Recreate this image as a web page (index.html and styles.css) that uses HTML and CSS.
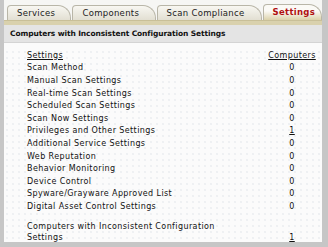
FILE: index.html
```html
<!DOCTYPE html>
<html lang="en">
<head>
  <meta charset="UTF-8">
  <title>Settings</title>
  <link rel="stylesheet" href="styles.css">
</head>
<body>

<div class="page">
  <div class="tabs">
    <div class="tab tab-services">Services</div>
    <div class="tab tab-components">Components</div>
    <div class="tab tab-scan">Scan Compliance</div>
    <div class="tab tab-settings active">Settings</div>
  </div>
  <div class="band"></div>

  <div class="panel">
    <div class="panel-title">Computers with Inconsistent Configuration Settings</div>
    <table class="grid">
      <tr class="head">
        <th class="name"><a href="#">Settings</a></th>
        <th class="count"><a href="#">Computers</a></th>
      </tr>
      <tr><td class="name">Scan Method</td><td class="count">0</td></tr>
      <tr><td class="name">Manual Scan Settings</td><td class="count">0</td></tr>
      <tr><td class="name">Real-time Scan Settings</td><td class="count">0</td></tr>
      <tr><td class="name">Scheduled Scan Settings</td><td class="count">0</td></tr>
      <tr><td class="name">Scan Now Settings</td><td class="count">0</td></tr>
      <tr><td class="name">Privileges and Other Settings</td><td class="count"><a href="#">1</a></td></tr>
      <tr><td class="name">Additional Service Settings</td><td class="count">0</td></tr>
      <tr><td class="name">Web Reputation</td><td class="count">0</td></tr>
      <tr><td class="name">Behavior Monitoring</td><td class="count">0</td></tr>
      <tr><td class="name">Device Control</td><td class="count">0</td></tr>
      <tr><td class="name">Spyware/Grayware Approved List</td><td class="count">0</td></tr>
      <tr><td class="name">Digital Asset Control Settings</td><td class="count">0</td></tr>
      <tr class="total">
        <td class="name">Computers with Inconsistent Configuration Settings</td>
        <td class="count"><a href="#">1</a></td>
      </tr>
    </table>
  </div>
</div>

</body>
</html>
```

FILE: styles.css
```css
body {
  margin: 0;
  background: #c6c6c6;
  font-family: "DejaVu Sans", Verdana, sans-serif;
  color: #111;
}

.page {
  margin-left: 4px;
  width: 318px;
  height: 242px;
  background: #f6f6f4;
  overflow: hidden;
}

.tabs {
  display: flex;
  gap: 1px;
  padding: 4px 0 0 3px;
  height: 16px;
}

.tab {
  box-sizing: border-box;
  height: 15px;
  margin-top: 1px;
  padding-left: 9px;
  font-size: 8.5px;
  letter-spacing: 0.3px;
  line-height: 14px;
  color: #222;
  background: linear-gradient(#f8f7f2, #e2dfd2);
  border: 1px solid #b9b6a8;
  border-bottom: none;
  border-radius: 4px 13px 0 0;
}

.tab-services { width: 65px; }
.tab-components { width: 84px; }
.tab-scan { width: 106px; }
.tab-settings { width: 60px; }

.tab.active {
  margin-top: 0;
  height: 16px;
  line-height: 15px;
  font-weight: bold;
  letter-spacing: 0.3px;
  color: #b01010;
  background: linear-gradient(#fbfaf6 40%, #dcd2aa);
}

.band {
  height: 4px;
  background: #d9d1ad;
  border-top: 1px solid #c8bf98;
}

.panel {
  background: #fbfbfb;
}

.panel-title {
  background: #e4e4e4;
  padding: 0 6px;
  height: 17px;
  line-height: 17px;
  font-size: 7.5px;
  letter-spacing: -0.1px;
  font-weight: bold;
  border-bottom: 1px solid #d4d4d4;
}

.grid {
  width: 100%;
  border-collapse: collapse;
  font-size: 8px;
  letter-spacing: 0.4px;
  margin-top: 6px;
  background-image: radial-gradient(#dfe3e8 0.6px, transparent 0.8px);
  background-size: 6px 6px;
}

.grid td, .grid th {
  padding: 0;
  height: 12.6px;
  font-weight: normal;
  text-align: left;
}

.grid .name {
  padding-left: 23px;
}

.grid .count {
  width: 60px;
  text-align: center;
}

.grid a {
  color: #111;
}

.total td {
  padding-top: 8px;
  line-height: 11px;
  vertical-align: top;
}

.total .name {
  padding-right: 30px;
}

.total .count {
  vertical-align: bottom;
}
```
